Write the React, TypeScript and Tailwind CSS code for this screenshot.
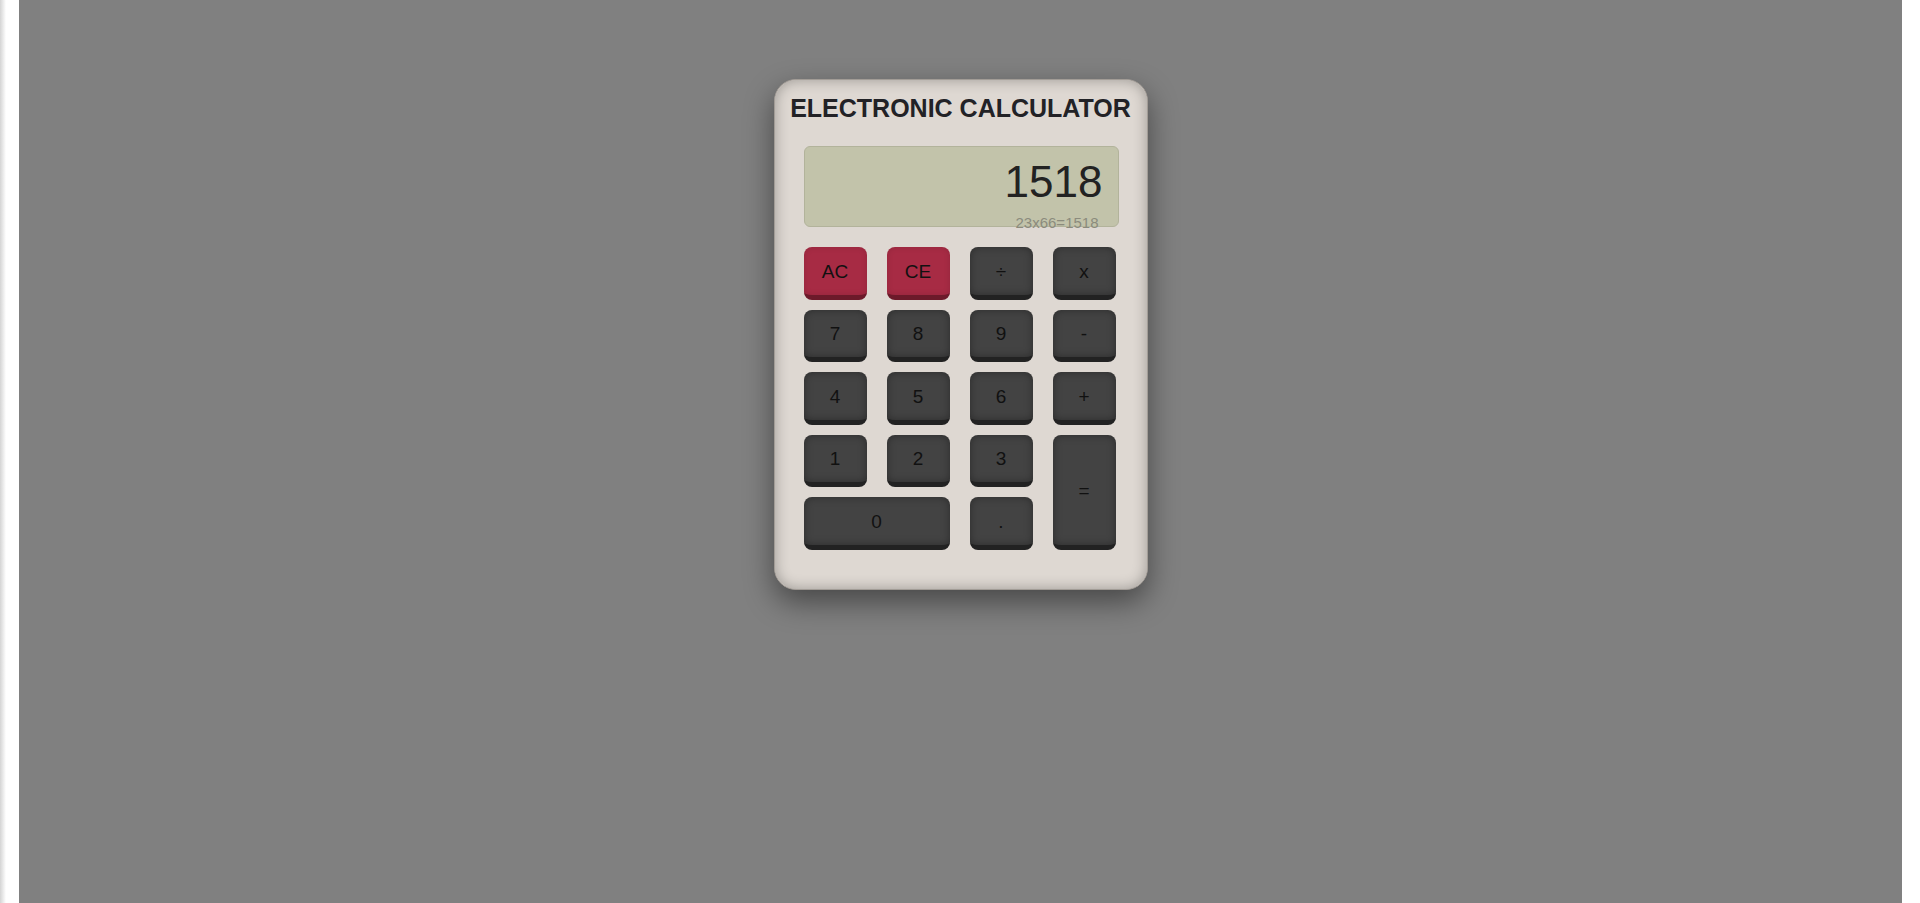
import React from "react";

type Key = { label: string; red?: boolean; cls?: string };

const keys: Key[] = [
  { label: "AC", red: true },
  { label: "CE", red: true },
  { label: "÷" },
  { label: "x" },
  { label: "7" },
  { label: "8" },
  { label: "9" },
  { label: "-" },
  { label: "4" },
  { label: "5" },
  { label: "6" },
  { label: "+" },
  { label: "1" },
  { label: "2" },
  { label: "3" },
  { label: "=", cls: "row-span-2" },
  { label: "0", cls: "col-span-2" },
  { label: "." },
];

function CalcKey({ k }: { k: Key }) {
  const base =
    "flex items-center justify-center rounded-[8px] border-b-[5px] text-[19px] text-[#111] leading-none select-none";
  const color = k.red
    ? "bg-[#a72b44] border-[#6c1a2a] shadow-[inset_0_0_6px_rgba(0,0,0,0.12)] text-[18px]"
    : "bg-[#434343] border-[#222222] shadow-[inset_0_0_9px_rgba(0,0,0,0.35)]";
  return (
    <div className={`${base} ${color} ${k.cls ?? ""}`}>
      <span className="pt-[1px]">{k.label}</span>
    </div>
  );
}

export default function App() {
  return (
    <div
      className="flex w-full h-[903px] overflow-hidden"
      style={{ fontFamily: '"Liberation Sans", Arial, sans-serif' }}
    >
      <div className="w-[19px] h-full bg-[linear-gradient(to_right,#d4d4d4_0px,#ffffff_6px,#ffffff_100%)]" />
      <div className="flex-1 h-full bg-[#808080] pt-[79px]">
        <div className="mx-auto w-[374px] h-[511px] rounded-[22px] border border-[#a29c96] bg-[#ded8d2] px-[29px] pt-[14px] shadow-[inset_0_0_14px_rgba(0,0,0,0.3),0_12px_30px_rgba(0,0,0,0.45)]">
          <div className="-mx-[20px] whitespace-nowrap text-center text-[25px] font-bold leading-[29px] text-[#222226]">
            ELECTRONIC CALCULATOR
          </div>
          <div className="mt-[23px] h-[81px] w-[315px] rounded-[6px] border border-[#b2b39b] bg-[#c2c3aa] pt-[9px] pr-[15px]">
            <div className="text-right text-[44px] leading-[52px] text-[#222]">
              1518
            </div>
            <div className="mt-[6px] pr-[4px] text-right text-[15px] leading-[17px] text-[#8b8b7d]">
              23x66=1518
            </div>
          </div>
          <div className="mt-[20px] grid grid-cols-[repeat(4,63px)] grid-rows-[repeat(5,52.5px)] gap-x-[20px] gap-y-[10px]">
            {keys.map((k) => (
              <CalcKey key={k.label} k={k} />
            ))}
          </div>
        </div>
      </div>
      <div className="w-[18px] h-full bg-white" />
    </div>
  );
}
